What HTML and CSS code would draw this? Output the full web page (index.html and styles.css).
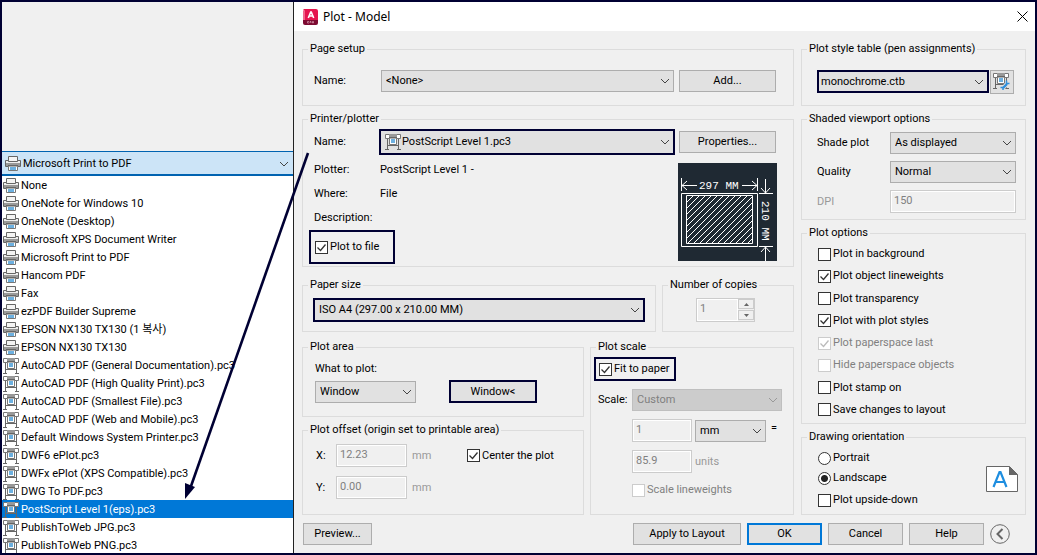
FILE: index.html
```html
<!DOCTYPE html>
<html lang="en">
<head>
<meta charset="utf-8">
<title>Plot - Model</title>
<link rel="stylesheet" href="styles.css">
</head>
<body>
<svg class="defs" aria-hidden="true">
  <symbol id="printer" viewBox="0 0 16 16">
    <path fill="#f4f4f4" stroke="#666" d="M3.500 5.500v-5h9v5z"/>
    <path fill="#eee" stroke="#666" d="M.5 4.500h3v1h9v-1h3v6h-15z"/>
    <path fill="#999" d="M1 7h14v3H1z"/>
    <path fill="#666" d="M3 9h10v2H3z"/>
    <path fill="#fff" stroke="#777" d="M3.500 10.500v4h9v-4"/>
    <path fill="#6cb0e0" d="M5 11h6v3H5z"/>
  </symbol>
  <symbol id="plotter" viewBox="0 0 16 16">
    <path fill="#fff" stroke="#777" d="M.5.5h15v4H.5z"/>
    <path fill="#999" d="M4 0h8v3H4z"/>
    <path fill="#666" d="M4 3h8v2H4z"/>
    <path fill="none" stroke="#666" d="M2.500 5v10.500M13.500 5v10.500M0 15.500h4M12 15.500h4M2.500 11.500h11"/>
    <path fill="#fff" stroke="#777" d="M4.500 4.500v6h7v-6"/>
    <path fill="#fff" d="M5 5h6v5H5z"/>
    <path fill="#6cb0e0" d="M6 5h4v4H6z"/>
  </symbol>
</svg>

<div class="screen">
  <section class="printers">
    <button type="button" class="printers-current">
      <svg class="icon"><use href="#printer"/></svg>
      <span>Microsoft Print to PDF</span>
      <svg class="chevron" viewBox="0 0 10 6"><path d="M1 1l4 4 4-4"/></svg>
    </button>
    <ul class="printers-list">
      <li><svg class="icon"><use href="#printer"/></svg>None</li>
      <li><svg class="icon"><use href="#printer"/></svg>OneNote for Windows 10</li>
      <li><svg class="icon"><use href="#printer"/></svg>OneNote (Desktop)</li>
      <li><svg class="icon"><use href="#printer"/></svg>Microsoft XPS Document Writer</li>
      <li><svg class="icon"><use href="#printer"/></svg>Microsoft Print to PDF</li>
      <li><svg class="icon"><use href="#printer"/></svg>Hancom PDF</li>
      <li><svg class="icon"><use href="#printer"/></svg>Fax</li>
      <li><svg class="icon"><use href="#printer"/></svg>ezPDF Builder Supreme</li>
      <li><svg class="icon"><use href="#printer"/></svg>EPSON NX130 TX130 (1 복사)</li>
      <li><svg class="icon"><use href="#printer"/></svg>EPSON NX130 TX130</li>
      <li><svg class="icon"><use href="#plotter"/></svg>AutoCAD PDF (General Documentation).pc3</li>
      <li><svg class="icon"><use href="#plotter"/></svg>AutoCAD PDF (High Quality Print).pc3</li>
      <li><svg class="icon"><use href="#plotter"/></svg>AutoCAD PDF (Smallest File).pc3</li>
      <li><svg class="icon"><use href="#plotter"/></svg>AutoCAD PDF (Web and Mobile).pc3</li>
      <li><svg class="icon"><use href="#plotter"/></svg>Default Windows System Printer.pc3</li>
      <li><svg class="icon"><use href="#plotter"/></svg>DWF6 ePlot.pc3</li>
      <li><svg class="icon"><use href="#plotter"/></svg>DWFx ePlot (XPS Compatible).pc3</li>
      <li><svg class="icon"><use href="#plotter"/></svg>DWG To PDF.pc3</li>
      <li class="selected"><svg class="icon"><use href="#plotter"/></svg>PostScript Level 1(eps).pc3</li>
      <li><svg class="icon"><use href="#plotter"/></svg>PublishToWeb JPG.pc3</li>
      <li><svg class="icon"><use href="#plotter"/></svg>PublishToWeb PNG.pc3</li>
    </ul>
  </section>

  <main class="dialog">
    <header class="titlebar">
      <svg class="app-icon" viewBox="0 0 15 16">
        <path fill="#e5154f" d="M2 0h11a2 2 0 0 1 2 2v9H1V2a1 1 0 0 1 1-2z"/>
        <path fill="#f0668c" d="M0 2l2-1v10H0z"/>
        <path fill="#7c0a31" d="M0 11h15v3a2 2 0 0 1-2 2H2a2 2 0 0 1-2-2z"/>
        <path fill="none" stroke="#fff" stroke-width="1.600" d="M5.300 9l2.400-6h.6l2.400 6M6.300 7h3.600"/>
        <path fill="none" stroke="#e6b4c4" stroke-width=".6" d="M6 12.500H4.500v1.500H6M7 14v-1.500h1V14M9.500 12.500h1V14h-1z"/>
      </svg>
      <h1>Plot - Model</h1>
      <button type="button" class="close" aria-label="Close"><svg viewBox="0 0 11 11"><path d="M.5.5l10 10M10.500.5l-10 10"/></svg></button>
    </header>

    <form class="content">
      <div class="main-column">
        <fieldset class="page-setup">
          <legend>Page setup</legend>
          <div class="name-row">
            <label for="setup">Name:</label>
            <select id="setup"><option>&lt;None&gt;</option></select>
            <button type="button">Add...</button>
          </div>
        </fieldset>

        <fieldset class="printer">
          <legend>Printer/plotter</legend>
          <div class="name-row">
            <label for="device">Name:</label>
            <div class="device marked">
              <select id="device"><option>PostScript Level 1.pc3</option></select>
              <svg class="icon"><use href="#plotter"/></svg>
            </div>
            <button type="button">Properties...</button>
          </div>
          <div class="device-details">
            <div>
              <dl>
                <dt>Plotter:</dt><dd>PostScript Level 1 -</dd>
                <dt>Where:</dt><dd>File</dd>
                <dt>Description:</dt><dd></dd>
              </dl>
              <label class="check to-file marked"><input type="checkbox" checked>Plot to file</label>
            </div>
            <svg class="paper-preview" viewBox="0 0 99 98">
              <defs>
                <pattern id="hatch" width="6" height="6" patternUnits="userSpaceOnUse">
                  <path d="M-1 1l2-2M0 6l6-6M5 7l2-2" stroke="#fff" fill="none"/>
                </pattern>
              </defs>
              <path fill="#1f2933" d="M0 0h99v98H0z"/>
              <path fill="url(#hatch)" stroke="#fff" d="M8.500 32.500h66v48h-66z"/>
              <path fill="none" stroke="#fff" d="M3.500 30.500h76v53h-76zM3.500 15v13M79.500 15v13M4 22.500h15M9 18l-5 4.500 5 4.500M64 22.500h15M74 18l5 4.500-5 4.500M81 30.500h14M81 83.500h14M87.500 16v14M83 25l4.500 5 4.500-5M87.500 98V84M83 89l4.500-5 4.500 5"/>
              <text x="21" y="26">297 MM</text>
              <text transform="translate(84 38) rotate(90)">210 MM</text>
            </svg>
          </div>
        </fieldset>

        <div class="paper-row">
          <fieldset class="paper">
            <legend>Paper size</legend>
            <select class="marked" aria-label="Paper size"><option>ISO A4 (297.00 x 210.00 MM)</option></select>
          </fieldset>
          <fieldset class="copies">
            <legend>Number of copies</legend>
            <div class="spinner">
              <input type="text" value="1" aria-label="Number of copies" disabled>
              <div class="spinner-buttons">
                <button type="button" aria-label="More copies" disabled><svg viewBox="0 0 5 3"><path d="M0 3l2.500-3L5 3z"/></svg></button>
                <button type="button" aria-label="Fewer copies" disabled><svg viewBox="0 0 5 3"><path d="M0 0l2.500 3L5 0z"/></svg></button>
              </div>
            </div>
          </fieldset>
        </div>

        <div class="area-row">
          <div class="area-column">
            <fieldset class="area">
              <legend>Plot area</legend>
              <label for="what">What to plot:</label>
              <div class="area-controls">
                <select id="what"><option>Window</option></select>
                <button type="button" class="marked">Window&lt;</button>
              </div>
            </fieldset>
            <fieldset class="offset">
              <legend>Plot offset (origin set to printable area)</legend>
              <div class="offset-grid">
                <label for="ox">X:</label><input id="ox" type="text" value="12.23" disabled><span class="unit">mm</span>
                <label class="check"><input type="checkbox" checked>Center the plot</label>
                <label for="oy">Y:</label><input id="oy" type="text" value="0.00" disabled><span class="unit">mm</span>
              </div>
            </fieldset>
          </div>
          <fieldset class="scale">
            <legend>Plot scale</legend>
            <label class="check fit marked"><input type="checkbox" checked>Fit to paper</label>
            <div class="scale-row">
              <label for="scale">Scale:</label>
              <select id="scale" disabled><option>Custom</option></select>
            </div>
            <div class="scale-line">
              <input type="text" value="1" aria-label="Paper units" disabled>
              <select aria-label="Unit"><option>mm</option></select>
              <span class="equals">=</span>
            </div>
            <div class="scale-line">
              <input type="text" id="units" value="85.9" disabled>
              <label for="units" class="unit">units</label>
            </div>
            <label class="check lineweights"><input type="checkbox" disabled>Scale lineweights</label>
          </fieldset>
        </div>
      </div>

      <div class="side-column">
        <fieldset class="style-table">
          <legend>Plot style table (pen assignments)</legend>
          <div class="style-row">
            <select class="marked" aria-label="Plot style table"><option>monochrome.ctb</option></select>
            <button type="button" class="edit" aria-label="Edit plot style"><svg viewBox="0 0 18 18"><use href="#plotter" width="16" height="16"/><path fill="none" stroke="#e1e1e1" stroke-width="4" d="M9 16l6-6"/><path fill="none" stroke="#2f8fdc" stroke-width="2.400" d="M10 15l4-4"/><path fill="none" stroke="#2f8fdc" stroke-width="1.500" d="M13.500 7.500v3h3M7.500 14.500h2.500v2.500"/></svg></button>
          </div>
        </fieldset>

        <fieldset class="shaded">
          <legend>Shaded viewport options</legend>
          <div class="shaded-grid">
            <label for="shade">Shade plot</label><select id="shade"><option>As displayed</option></select>
            <label for="quality">Quality</label><select id="quality"><option>Normal</option></select>
            <label for="dpi" class="unit">DPI</label><input id="dpi" type="text" value="150" disabled>
          </div>
        </fieldset>

        <fieldset class="options">
          <legend>Plot options</legend>
          <div class="option-list">
            <label class="check"><input type="checkbox">Plot in background</label>
            <label class="check"><input type="checkbox" checked>Plot object lineweights</label>
            <label class="check"><input type="checkbox">Plot transparency</label>
            <label class="check"><input type="checkbox" checked>Plot with plot styles</label>
            <label class="check"><input type="checkbox" checked disabled>Plot paperspace last</label>
            <label class="check"><input type="checkbox" disabled>Hide paperspace objects</label>
            <label class="check"><input type="checkbox">Plot stamp on</label>
            <label class="check"><input type="checkbox">Save changes to layout</label>
          </div>
        </fieldset>

        <fieldset class="orientation">
          <legend>Drawing orientation</legend>
          <div class="orientation-body">
            <div class="orientation-list">
              <label class="check"><input type="radio" name="orientation">Portrait</label>
              <label class="check"><input type="radio" name="orientation" checked>Landscape</label>
              <label class="check"><input type="checkbox">Plot upside-down</label>
            </div>
            <svg class="page-icon" viewBox="0 0 32 26">
              <path fill="#fff" stroke="#666" d="M.5.5h23l8 8v17H.5z"/>
              <path fill="#666" d="M23 0l9 9h-9z"/>
              <path fill="none" stroke="#1e8ee0" stroke-width="2.200" d="M7.500 21l6-15h1l6 15M9.500 16h9"/>
            </svg>
          </div>
        </fieldset>
      </div>

      <footer class="actions">
        <button type="button" class="preview">Preview...</button>
        <button type="button" class="apply">Apply to Layout</button>
        <button type="submit" class="default">OK</button>
        <button type="button">Cancel</button>
        <button type="button">Help</button>
        <button type="button" class="less" aria-label="Less options"><svg viewBox="0 0 20 20"><circle cx="10" cy="10" r="9.300"/><path d="M12.500 5l-5 5 5 5"/></svg></button>
      </footer>
    </form>
  </main>

  <svg class="pointer" viewBox="0 0 130 352" aria-hidden="true">
    <path fill="none" stroke="#000033" stroke-width="2.600" d="M127 3L9 339"/>
    <path fill="#000033" d="M4 349V333l10 4z"/>
  </svg>
</div>
</body>
</html>
```
FILE: styles.css
```css
* { box-sizing: border-box; }

:root {
  --navy: #000033;
  --face: #f0f0f0;
  --control: #e1e1e1;
  --edge: #adadad;
  --line: #dcdcdc;
  --dim: #808080;
}

body {
  margin: 0;
  background: var(--face);
  color: #000;
  font: 11px/14px Roboto, "Noto Sans CJK KR", sans-serif;
}

button, input, select { font: inherit; color: inherit; margin: 0; border-radius: 0; }

.defs { position: absolute; width: 0; height: 0; }
.icon { width: 16px; height: 16px; flex: none; }

.screen {
  position: relative;
  display: flex;
  height: 100vh;
  border: 2px solid var(--navy);
  overflow: hidden;
}

/* open printer list */
.printers {
  flex: none;
  width: 292px;
  padding-top: 149px;
  border-right: 1px solid #222;
}

.printers-current {
  display: flex;
  align-items: center;
  gap: 2px;
  width: 100%;
  height: 25px;
  padding: 1px 4px 0 3px;
  border: solid #0063b1;
  border-width: 1px 0 2px;
  background: #cce4f7;
  text-align: left;
}

.printers-current span { flex: 1; }

.chevron { width: 10px; height: 6px; }
.chevron path { fill: none; stroke: #444; }

.printers-list {
  margin: 0;
  padding: 0;
  list-style: none;
  background: #fff;
}

.printers-list li {
  display: flex;
  align-items: center;
  gap: 2px;
  height: 18px;
  padding: 2px 0 0 1px;
  white-space: nowrap;
}

.printers-list .selected { background: #0078d7; color: #fff; }

/* dialog frame */
.dialog { flex: 1; min-width: 0; }

.titlebar {
  display: flex;
  align-items: center;
  height: 29px;
  padding: 0 7px 0 9px;
  background: #fff;
}

.titlebar h1 {
  flex: 1;
  margin: 0 0 0 5px;
  font: 12px/16px "Noto Sans", sans-serif;
}

.app-icon { width: 15px; height: 16px; }
.close { display: flex; align-items: center; padding: 0; border: 0; background: none; }
.close svg { width: 11px; height: 11px; }
.close path { stroke: #000; fill: none; }

.content {
  display: grid;
  grid-template-columns: minmax(0, 1fr) 225px;
  column-gap: 7px;
  row-gap: 8px;
  padding: 11px 9px 9px 8px;
}

.main-column, .side-column { display: flex; flex-direction: column; gap: 6px; }

/* groups: --inset is the left padding; legends all start at the same place */
fieldset {
  --inset: 12px;
  min-width: 0;
  margin: 0;
  padding: 0 0 0 var(--inset);
  border: 1px solid var(--line);
}

legend {
  margin-left: calc(5px - var(--inset));
  padding: 0 2px;
  line-height: 14px;
  white-space: nowrap;
}

/* controls */
button, select {
  height: 22px;
  padding: 0 6px;
  border: 1px solid var(--edge);
  background-color: var(--control);
}

select {
  appearance: none;
  padding: 0 18px 0 4px;
  background-image: url("data:image/svg+xml,%3Csvg xmlns='http://www.w3.org/2000/svg' width='10' height='6'%3E%3Cpath d='M1 1l4 4 4-4' fill='none' stroke='%23444'/%3E%3C/svg%3E");
  background-repeat: no-repeat;
  background-position: right 3px center;
}

select:disabled {
  border-color: #bfbfbf;
  background-color: #ccc;
  background-image: url("data:image/svg+xml,%3Csvg xmlns='http://www.w3.org/2000/svg' width='10' height='6'%3E%3Cpath d='M1 1l4 4 4-4' fill='none' stroke='%23999'/%3E%3C/svg%3E");
  color: var(--dim);
  opacity: 1;
}

input[type="text"] {
  width: 100%;
  min-width: 0;
  height: 23px;
  padding: 0 3px 3px;
  border: 1px solid #ccc;
  background: var(--face);
  box-shadow: inset 0 0 0 1px #fff;
  color: var(--dim);
}

.marked { border: 2px solid var(--navy); }

.unit { color: #999; }

.check { display: flex; align-items: center; gap: 2px; white-space: nowrap; }
.check:has(:disabled) { color: var(--dim); }

.check input {
  appearance: none;
  flex: none;
  width: 13px;
  height: 13px;
  border: 1px solid #333;
  background: #fff center no-repeat;
}

.check input[type="checkbox"]:checked {
  background-image: url("data:image/svg+xml,%3Csvg xmlns='http://www.w3.org/2000/svg' width='11' height='11'%3E%3Cpath d='M1.500 5.500l3 3 5-6' fill='none' stroke='%23333' stroke-width='1.300'/%3E%3C/svg%3E");
}

.check input[type="radio"] { border-radius: 50%; }
.check input[type="radio"]:checked { background-image: radial-gradient(circle, #222 0 3px, transparent 4px); }
.check input:disabled { border-color: #ccc; opacity: 1; }

.check input[type="checkbox"]:checked:disabled {
  background-image: url("data:image/svg+xml,%3Csvg xmlns='http://www.w3.org/2000/svg' width='11' height='11'%3E%3Cpath d='M1.500 5.500l3 3 5-6' fill='none' stroke='%23bbb' stroke-width='1.300'/%3E%3C/svg%3E");
}

/* page setup and printer */
.name-row {
  display: grid;
  grid-template-columns: 62px minmax(0, 1fr) 97px;
  align-items: center;
  column-gap: 5px;
  padding-left: 5px;
}

.page-setup, .printer { --inset: 6px; }
.page-setup { padding: 14px 17px 13px var(--inset); }
.printer { padding: 3px 17px 2px var(--inset); }

.device { position: relative; height: 26px; margin: 0 -1px 0 -2px; background: var(--control); }
.device select { width: 100%; height: 22px; padding-left: 21px; border: 0; }
.device .icon { position: absolute; left: 4px; top: 3px; pointer-events: none; }

.device-details {
  display: flex;
  justify-content: space-between;
  align-items: flex-end;
  margin-right: -1px;
}

dl {
  display: grid;
  grid-template-columns: 66px 1fr;
  margin: 3px 0 0;
  padding-left: 5px;
  line-height: 24px;
}

dd { margin: 0; }

.to-file { width: 86px; height: 34px; padding-left: 4px; }
.paper-preview { width: 99px; height: 98px; margin-bottom: 3px; }
.paper-preview text { fill: #fff; font: 11px "Liberation Mono", monospace; }

/* paper size and copies */
.paper-row {
  display: grid;
  grid-template-columns: minmax(0, 1fr) 132px;
  gap: 6px;
  margin: 5px 0 2px;
}

.paper, .copies { padding: 6px 10px 9px var(--inset); }
.paper { --inset: 10px; }
.paper select { width: 100%; height: 24px; }
.copies { --inset: 33px; }

.spinner { display: flex; width: 59px; border: 1px solid #ccc; }
.spinner input[type="text"] { flex: 1; height: 22px; border: 0; }
.spinner-buttons { display: flex; flex-direction: column; gap: 1px; }

.spinner-buttons button {
  display: flex;
  align-items: center;
  justify-content: center;
  width: 16px;
  height: 10px;
  padding: 0;
  border-color: #ccc;
  background: var(--face);
}

.spinner-buttons svg { width: 5px; height: 3px; fill: #666; }

/* plot area, offset, scale */
.area-row {
  display: grid;
  grid-template-columns: minmax(0, 1fr) 204px;
  gap: 6px;
}

.area-column { display: flex; flex-direction: column; gap: 6px; }
.area { padding: 8px 12px 13px var(--inset); }
.area label { display: block; margin-bottom: 4px; }
.area-controls { display: flex; gap: 33px; align-items: center; }
.area-controls select { width: 101px; }
.area-controls button { width: 88px; height: 23px; }

.offset { --inset: 13px; padding: 7px 12px 15px var(--inset); }

.offset-grid {
  display: grid;
  grid-template-columns: 20px 71px 50px 1fr;
  row-gap: 9px;
  align-items: center;
}

.offset-grid .unit { padding-left: 5px; }
.offset-grid .check { padding-left: 10px; }

.scale { --inset: 3px; padding: 3px 11px 10px var(--inset); }
.fit { width: 82px; height: 24px; padding-left: 3px; }
.scale-row { display: grid; grid-template-columns: 34px 1fr; align-items: center; margin: 8px 0; padding-left: 4px; }
.scale-line { display: flex; gap: 3px; margin: 0 0 8px 38px; align-items: center; }
.scale-line input[type="text"] { width: 60px; }
.scale-line select { width: 71px; }
.equals { padding: 0 0 6px 2px; }
.lineweights { margin-left: 38px; padding-top: 2px; }

/* side column */
.style-table { --inset: 15px; padding: 14px 11px 11px var(--inset); }
.style-row { display: flex; gap: 1px; }
.style-row select { flex: 1; min-width: 0; height: 23px; padding-left: 2px; }
.edit { display: flex; align-items: center; justify-content: center; width: 24px; height: 24px; padding: 0; }
.edit svg { width: 18px; height: 18px; }

.shaded { --inset: 15px; padding: 6px 9px 6px var(--inset); }
.shaded-grid { display: grid; grid-template-columns: 73px 1fr; row-gap: 7px; align-items: center; }

.options { --inset: 16px; flex: 1; padding: 4px 6px 2px var(--inset); }
.option-list { display: flex; flex-direction: column; justify-content: space-between; min-height: 176px; }
.option-list .check { height: 20px; }

.orientation { --inset: 16px; padding: 4px 7px 4px var(--inset); }
.orientation-body { display: flex; justify-content: space-between; align-items: center; }
.orientation-list { display: flex; flex-direction: column; }
.orientation-list .check { height: 20px; }
.orientation-list .check:last-child { margin-top: 2px; }
.page-icon { width: 32px; height: 26px; }

/* bottom buttons */
.actions {
  grid-column: 1 / -1;
  display: flex;
  align-items: center;
  gap: 6px;
  padding: 0 16px 0 1px;
}

.actions button { width: 75px; height: 22px; }
.actions .preview { width: 69px; margin-right: auto; }
.actions .apply { width: 108px; }
.actions .default { border: 2px solid #0078d7; }
.actions .less { display: flex; width: 20px; height: 20px; padding: 0; border: 0; background: none; }
.less svg { width: 20px; height: 20px; fill: none; stroke: #666; }
.less path { stroke-width: 2; }

/* arrow from the dialog to the chosen list entry */
.pointer {
  position: absolute;
  left: 179px;
  top: 148px;
  width: 130px;
  height: 352px;
  pointer-events: none;
}
```
